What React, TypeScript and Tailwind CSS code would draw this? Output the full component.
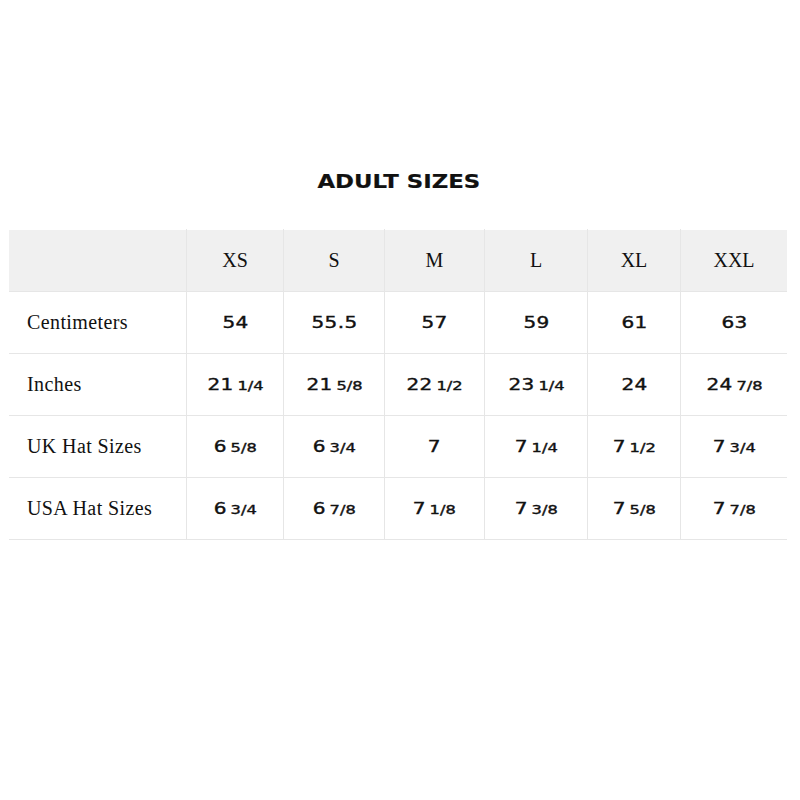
const sizes = ['XS', 'S', 'M', 'L', 'XL', 'XXL'];
const colWidths = ['w-[97px]', 'w-[101px]', 'w-[100px]', 'w-[103px]', 'w-[93px]', 'w-[107px]'];

type Val = [string, string?];

const rows: { label: string; values: Val[] }[] = [
  { label: 'Centimeters', values: [['54'], ['55.5'], ['57'], ['59'], ['61'], ['63']] },
  { label: 'Inches', values: [['21', '1/4'], ['21', '5/8'], ['22', '1/2'], ['23', '1/4'], ['24'], ['24', '7/8']] },
  { label: 'UK Hat Sizes', values: [['6', '5/8'], ['6', '3/4'], ['7'], ['7', '1/4'], ['7', '1/2'], ['7', '3/4']] },
  { label: 'USA Hat Sizes', values: [['6', '3/4'], ['6', '7/8'], ['7', '1/8'], ['7', '3/8'], ['7', '5/8'], ['7', '7/8']] },
];

const serif = "font-['Liberation_Serif',serif]";
const wide = "font-['DejaVu_Sans',sans-serif]";

export default function App() {
  return (
    <div className="w-[800px] h-[800px] bg-white pt-[168px] text-[#111]">
      <div className="flex justify-center">
        <h1
          className={`${wide} inline-block text-[19px] font-bold leading-[26px] scale-x-[1.2] [-webkit-text-stroke:0.2px] ml-[-2px]`}
        >
          ADULT SIZES
        </h1>
      </div>
      <div className="mt-[36px] ml-[9px] w-[778px]">
        <div className="flex h-[62px] bg-[#f0f0f0] border-b border-[#e6e6e6]">
          <div className="w-[177px]" />
          {sizes.map((s, i) => (
            <div
              key={s}
              className={`${colWidths[i]} ${serif} border-l border-[#e6e6e6] flex items-center justify-center text-[20px] mt-[-1px]`}
            >
              {s}
            </div>
          ))}
        </div>
        {rows.map((r) => (
          <div key={r.label} className="flex h-[62px] border-b border-[#e6e6e6]">
            <div className={`w-[177px] ${serif} flex items-center pl-[18px] pb-[2px] text-[20px] tracking-[0.02em]`}>
              {r.label}
            </div>
            {r.values.map((v, i) => (
              <div
                key={i}
                className={`${colWidths[i]} ${wide} border-l border-[#e6e6e6] flex items-center justify-center`}
              >
                <div className="flex items-baseline scale-x-[1.25] [-webkit-text-stroke:0.4px] mt-[1px]">
                  <span className="text-[16px] tracking-[0.02em]">{v[0]}</span>
                  {v[1] && <span className="text-[13px] ml-[3px]">{v[1]}</span>}
                </div>
              </div>
            ))}
          </div>
        ))}
      </div>
    </div>
  );
}
